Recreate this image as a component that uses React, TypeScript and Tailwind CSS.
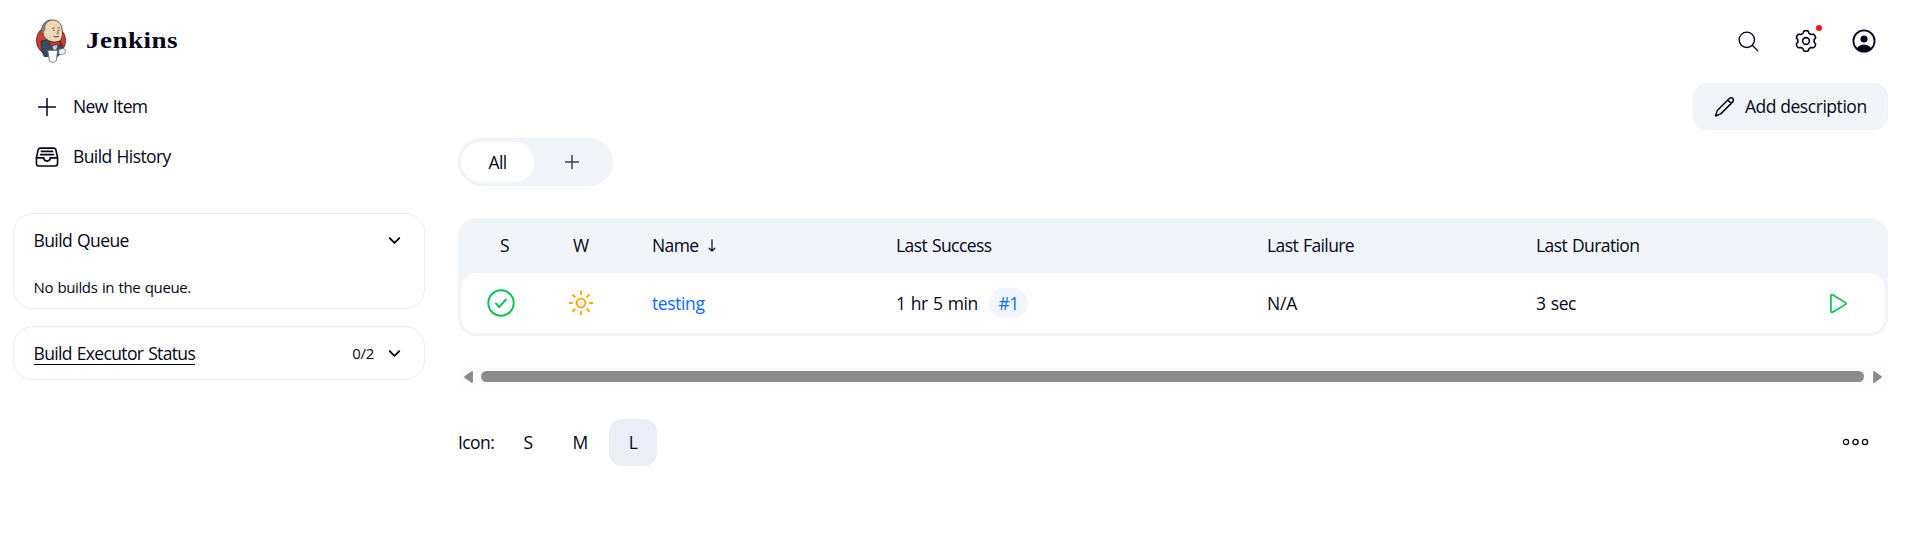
import type { ReactNode } from 'react';
import {
  IoChevronDownOutline,
  IoFileTrayFullOutline,
  IoPlayOutline,
  IoSearchOutline,
  IoSunnyOutline,
} from 'react-icons/io5';

const gearPoints = Array.from({ length: 144 }, (_, i) => {
  const t = (i / 144) * Math.PI * 2;
  const wave = Math.tanh(2.2 * (Math.cos(6 * (t - Math.PI / 2)) + 0.15));
  const r = 9.2 + 1.1 * wave;
  return `${(12 + r * Math.cos(t)).toFixed(2)},${(12 + r * Math.sin(t)).toFixed(2)}`;
}).join(' ');

function ButlerLogo() {
  return (
    <svg width="32" height="44" viewBox="0 0 32 44">
      <ellipse cx="16" cy="21.500" rx="14.700" ry="14.800" fill="#d33833" stroke="#3a2222" strokeWidth="0.7" />
      <path d="M6 22 L12 21 L25 22 L27.500 27 L26.500 34 L22 38 L9 37.500 L6.500 30 Z" fill="#335061" stroke="#1b2a33" strokeWidth="0.7" />
      <path d="M7 11 C7 5 11 1.200 17 1 C23.500 0.900 26.800 5 27 10 C28 14 27.500 18.500 25.500 21.500 C22 23.800 17 23.500 13.500 21.500 C9.500 19.500 7.500 16 7 11 Z" fill="#f0d6b7" stroke="#3a3330" strokeWidth="0.8" />
      <path d="M6.800 13 C6 7 9.500 1.800 15.500 1.100 C12 3 9.800 5.500 9.800 8.500 L9.800 11 L8.400 13 L8.600 17 C7.300 16 7 15 6.800 13 Z" fill="#85857f" stroke="#444" strokeWidth="0.5" />
      <path d="M17 9.500 L19.500 8.800 M22.500 8.800 L25 9.200 M18 11.300 L20 11.200 M23 11.200 L24.500 11.400 M22.500 11.500 L23.300 14.300 L21.500 14.800" stroke="#4a3a32" strokeWidth="0.7" fill="none" />
      <path d="M18.500 17.300 C20 18.100 22 18 24 17.200" stroke="#4a3a32" strokeWidth="1" fill="none" />
      <path d="M17 26 L23 26 L21 31 L18.500 30.500 Z" fill="#c6d0d4" />
      <path d="M14.500 22 L19 23.500 L24.500 22 L25 27 L20.500 25.800 L15.500 27.500 Z" fill="#d33833" stroke="#5c1d1a" strokeWidth="0.7" />
      <path d="M12.800 31.500 L22.500 31.500 L21.300 42 C20 43.500 16 43.500 14.500 42.500 Z" fill="#fff" stroke="#6b6b6b" strokeWidth="0.8" />
      <path d="M24 30.500 L28 29.500 L30.500 31 L30 34.500 L26 36 L23.500 34.500 Z" fill="#f2f2f2" stroke="#6b6b6b" strokeWidth="0.7" />
    </svg>
  );
}

function PlusIcon({ size, width, className }: { size: number; width: number; className?: string }) {
  return (
    <svg width={size} height={size} viewBox={`0 0 ${size} ${size}`} className={className}>
      <path
        d={`M${size / 2} 0.500V${size - 0.5}M0.500 ${size / 2}H${size - 0.5}`}
        stroke="currentColor"
        strokeWidth={width}
        strokeLinecap="round"
      />
    </svg>
  );
}

function Header() {
  return (
    <header className="flex h-[82px] items-start justify-between pl-[35px] pr-[43px] pt-[19px]">
      <div className="flex items-start">
        <ButlerLogo />
        <span className="ml-[19px] mt-[5px] origin-left scale-x-[1.13] font-['Liberation_Serif',serif] text-[24px] font-bold leading-[32px] tracking-[0.4px]">
          Jenkins
        </span>
      </div>
      <div className="flex pt-[10px]">
        <IoSearchOutline className="mr-[33px] size-[25px] [&_path]:[stroke-width:28px]" />
        <div className="relative mr-[34px] size-[24px]">
          <svg width="24" height="24" viewBox="0 0 24 24" fill="none" stroke="currentColor" strokeWidth="1.6" strokeLinejoin="round">
            <polygon points={gearPoints} />
            <circle cx="12" cy="12" r="3.400" />
          </svg>
          <span className="absolute -top-[4px] left-[22px] size-[6px] rounded-full bg-[#ff1414]" />
        </div>
        <svg width="24" height="24" viewBox="0 0 24 24">
          <defs>
            <clipPath id="disc">
              <circle cx="12" cy="12" r="11" />
            </clipPath>
          </defs>
          <circle cx="12" cy="12" r="10.600" fill="none" stroke="currentColor" strokeWidth="1.800" />
          <circle cx="12" cy="10" r="3.600" fill="currentColor" />
          <ellipse cx="12" cy="21" rx="7.600" ry="5.400" fill="currentColor" clipPath="url(#disc)" />
        </svg>
      </div>
    </header>
  );
}

function Task({ icon, label }: { icon: ReactNode; label: string }) {
  return (
    <a className="flex h-[50px] items-center pl-[21px]">
      <span className="flex w-[25px] justify-center">{icon}</span>
      <span className="ml-[14px] pb-[2px]">{label}</span>
    </a>
  );
}

function Sidebar() {
  return (
    <aside className="ml-[13px] w-[412px] shrink-0">
      <nav className="flex flex-col">
        <Task icon={<PlusIcon size={18} width={1.5} />} label="New Item" />
        <Task icon={<IoFileTrayFullOutline className="size-[26px] shrink-0" />} label="Build History" />
      </nav>
      <section className="mt-[31px] h-[96px] rounded-[20px] border border-[#e9ecf4] pl-[19.500px] pr-[20px]">
        <div className="flex h-[53px] items-center justify-between">
          <span className="pb-[1px]">Build Queue</span>
          <IoChevronDownOutline className="mr-[1px] size-[17px] [&_path]:[stroke-width:56px]" />
        </div>
        <p className="pt-[8px] text-[15px] leading-[24px] tracking-[-0.4px]">No builds in the queue.</p>
      </section>
      <section className="mt-[17px] flex h-[54px] items-center rounded-[20px] border border-[#e9ecf4] pl-[19.500px] pr-[20px]">
        <span className="flex-1">
          <span className="inline-block border-b border-[#05051a] pt-[3px] leading-[21px] tracking-[-0.65px]">Build Executor Status</span>
        </span>
        <span className="pb-[1px] text-[15px] tracking-[-0.3px]">0/2</span>
        <IoChevronDownOutline className="ml-[12px] mr-[1px] size-[17px] [&_path]:[stroke-width:56px]" />
      </section>
    </aside>
  );
}

const columns = 'grid grid-cols-[77px_109px_244px_371px_269px_1fr]';

function JobTable() {
  return (
    <section className="mt-[32px] rounded-[18px] bg-[#f1f5f9] px-[3px] pb-[3px]">
      <div className={`${columns} h-[55px] items-center pb-[2px] pl-[5px]`}>
        <span className="text-center">S</span>
        <span className="pl-[30px]">W</span>
        <span className="flex items-center">
          Name
          <svg width="8" height="13" viewBox="0 0 8 13" className="ml-[9px] mt-[2px]" fill="none" stroke="currentColor" strokeWidth="1.200">
            <path d="M4 0.500V12M1 9L4 12L7 9" />
          </svg>
        </span>
        <span>Last Success</span>
        <span>Last Failure</span>
        <span>Last Duration</span>
      </div>
      <div className={`${columns} h-[60px] items-center rounded-[16px] bg-white pl-[5px]`}>
        <svg width="28" height="28" viewBox="0 0 28 28" fill="none" stroke="#00c352" strokeWidth="1.900" strokeLinecap="round" strokeLinejoin="round" className="ml-[21px]">
          <circle cx="14" cy="14" r="12.700" />
          <path d="M9 14.500L12.200 18L19 10.500" />
        </svg>
        <IoSunnyOutline className="ml-[24px] size-[28px] text-[#ffaa00] [&_*]:[stroke-width:36px]" />
        <a className="pb-[1px] tracking-[-0.4px] text-[#0b6aff]">testing</a>
        <span className="flex items-center">
          <span className="w-[93px] whitespace-nowrap pb-[1px] tracking-[-0.4px]">1 hr 5 min</span>
          <a className="flex h-[30px] w-[39px] items-center justify-center rounded-full bg-[#f1f6fe] text-[#0b6aff]">#1</a>
        </span>
        <span className="pb-[1px] tracking-[-0.2px]">N/A</span>
        <span className="flex items-center justify-between pr-[33px]">
          <span className="pb-[1px] tracking-[-0.4px]">3 sec</span>
          <IoPlayOutline className="size-[27px] text-[#00c352]" />
        </span>
      </div>
    </section>
  );
}

function ScrollStrip() {
  return (
    <div className="mt-[31px] flex h-[19px] items-center justify-between bg-[#fcfcfc] px-[6px] text-[#8b8b8b]">
      <svg width="9" height="12" viewBox="0 0 9 12">
        <path d="M8 1V11L1 6Z" fill="currentColor" stroke="currentColor" strokeWidth="1.800" strokeLinejoin="round" />
      </svg>
      <div className="ml-[8px] mr-[9px] h-[11px] flex-1 rounded-full bg-[#8b8b8b]" />
      <svg width="9" height="12" viewBox="0 0 9 12">
        <path d="M1 1V11L8 6Z" fill="currentColor" stroke="currentColor" strokeWidth="1.800" strokeLinejoin="round" />
      </svg>
    </div>
  );
}

function Main() {
  return (
    <main className="ml-[33px] mt-[1px] w-[1430px]">
      <div className="flex justify-end">
        <button className="flex h-[47px] w-[195px] items-center rounded-[14px] border border-[#edf1f6] bg-[#f1f5f9] pl-[20px] tracking-[-0.45px]">
          <svg width="22" height="22" viewBox="0 0 22 22" fill="none" stroke="currentColor" strokeWidth="1.500" strokeLinejoin="round">
            <path d="M1.500 20L3.300 14.500L14.800 3C16.200 1.600 17.700 1.300 18.800 2.400C19.900 3.500 19.600 5 18.200 6.400L6.700 17.900Z M14 4.200L17.200 7.400" />
          </svg>
          <span className="ml-[9px] whitespace-nowrap pb-[1px]">Add description</span>
        </button>
      </div>
      <div className="mt-[8px] flex h-[48px] w-[155px] items-center rounded-full border border-[#edf1f5] bg-[#f1f5f9] pl-[2px]">
        <span className="flex h-[40px] w-[73px] items-center justify-center rounded-full bg-white">All</span>
        <PlusIcon size={14} width={1.5} className="ml-[31px] text-[#33405f]" />
      </div>
      <JobTable />
      <ScrollStrip />
      <div className="mt-[33px] flex h-[47px] items-center">
        <span className="w-[46px] whitespace-nowrap pb-[2px]">Icon:</span>
        <span className="w-[48px] pb-[2px] text-center">S</span>
        <span className="ml-[4px] w-[48px] pb-[2px] text-center">M</span>
        <span className="ml-[5px] flex h-[47px] w-[48px] items-center justify-center rounded-[13px] bg-[#ebeef6] pb-[2px]">L</span>
        <svg width="28" height="8" viewBox="0 0 28 8" fill="none" stroke="currentColor" strokeWidth="1.300" className="-mt-[2px] ml-auto mr-[18px]">
          <circle cx="4" cy="4" r="2.600" />
          <circle cx="13.500" cy="4" r="2.600" />
          <circle cx="23" cy="4" r="2.600" />
        </svg>
      </div>
    </main>
  );
}

export default function App() {
  return (
    <div className="min-h-[560px] bg-white font-['Open_Sans','Noto_Sans',sans-serif] text-[17.5px] leading-[26px] tracking-[-0.6px] text-[#05051a] [word-spacing:1px]">
      <Header />
      <div className="flex">
        <Sidebar />
        <Main />
      </div>
    </div>
  );
}
